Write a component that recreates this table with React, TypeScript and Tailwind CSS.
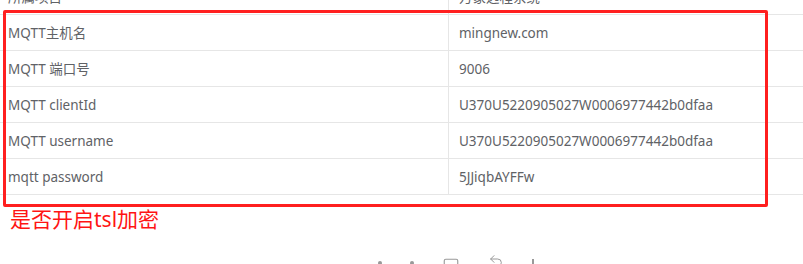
import { Square, Undo2 } from 'lucide-react';

const rows: [string, string][] = [
  ['所属项目', '万象远程系统'],
  ['MQTT主机名', 'mingnew.com'],
  ['MQTT 端口号', '9006'],
  ['MQTT clientId', 'U370U5220905027W0006977442b0dfaa'],
  ['MQTT username', 'U370U5220905027W0006977442b0dfaa'],
  ['mqtt password', '5JJiqbAYFFw'],
];

export default function App() {
  return (
    <div
      className="relative h-[264px] w-[803px] overflow-hidden bg-white"
      style={{ fontFamily: '"Noto Sans", "Noto Sans CJK SC", sans-serif' }}
    >
      <div className="-mt-[21px]">
        {rows.map(([label, value]) => (
          <div key={label} className="flex h-[36px] border-b border-[#e6e6e6] text-[13.5px] text-[#606266]">
            <div className="flex w-[449px] items-center border-r border-[#e6e6e6] pl-[8px] pt-[2px]">{label}</div>
            <div className="flex flex-1 items-center pl-[10px] pt-[2px]">{value}</div>
          </div>
        ))}
      </div>

      <div className="mt-[11px] pl-[10px] text-[21px] leading-[26px] text-[#ff1414]">是否开启tsl加密</div>

      <div className="mt-[25px] flex items-start gap-[28px] pl-[378px] text-[#999]">
        <span className="mt-[4px] h-[4px] w-[4px] rounded-full bg-[#999]" />
        <span className="mt-[4px] h-[4px] w-[4px] rounded-full bg-[#999]" />
        <Square className="h-[18px] w-[18px]" strokeWidth={1.5} />
        <Undo2 className="h-[16px] w-[16px] -mt-[4px]" strokeWidth={1.5} />
        <span className="mt-[2px] h-[10px] w-[1.5px] bg-[#999]" />
      </div>

      <div className="pointer-events-none absolute left-[3px] top-[10px] h-[197px] w-[765px] rounded-[2px] border-[3px] border-[#ff1f1f]" />
    </div>
  );
}
